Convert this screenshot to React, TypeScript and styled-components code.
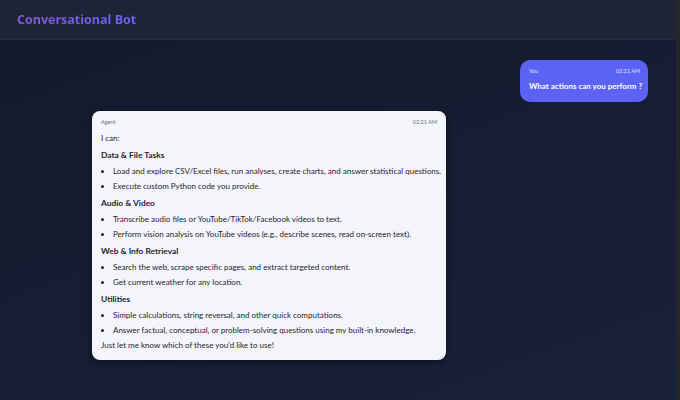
import React from "react";
import styled, { createGlobalStyle } from "styled-components";

const Global = createGlobalStyle`
  html, body { margin: 0; padding: 0; }
  body {
    width: 680px;
    height: 400px;
    overflow: hidden;
    background: #151a2d;
    font-family: "Lato", "Open Sans", sans-serif;
  }
`;

const Shell = styled.div`
  width: 680px;
  height: 400px;
  display: flex;
  flex-direction: column;
  background: linear-gradient(160deg, #141a2c 0%, #171d33 60%, #19203a 100%);
  border-right: 4px solid #23272a;
  box-sizing: border-box;
`;

const Header = styled.header`
  height: 40px;
  flex: none;
  display: flex;
  align-items: center;
  padding: 0 17px;
  background: #1d2435;
  border-bottom: 1px solid #252c3e;
  box-sizing: border-box;
`;

const Title = styled.h1`
  margin: 0;
  font-family: "Open Sans", sans-serif;
  font-size: 12.5px;
  font-weight: 700;
  background: linear-gradient(90deg, #8456e6, #6a64f0);
  -webkit-background-clip: text;
  background-clip: text;
  color: transparent;
`;

const Thread = styled.main`
  flex: 1;
  display: flex;
  flex-direction: column;
  gap: 9px;
  padding: 20px 28px 0 92px;
`;

const Bubble = styled.div<{ $mine?: boolean }>`
  align-self: ${(p) => (p.$mine ? "flex-end" : "flex-start")};
  width: ${(p) => (p.$mine ? "128px" : "354px")};
  box-sizing: border-box;
  border-radius: ${(p) => (p.$mine ? "10px" : "8px")};
  padding: ${(p) => (p.$mine ? "7px 8px 8px 9px" : "7px 9px 7px 9px")};
  background: ${(p) => (p.$mine ? "#5b62f4" : "#f4f5fb")};
  color: ${(p) => (p.$mine ? "#ffffff" : "#1f2330")};
  box-shadow: ${(p) => (p.$mine ? "none" : "0 2px 6px rgba(0,0,0,0.45)")};
`;

const Meta = styled.div<{ $mine?: boolean }>`
  display: flex;
  justify-content: space-between;
  font-size: 5.5px;
  line-height: 8px;
  color: ${(p) => (p.$mine ? "#dfe2ff" : "#6b7080")};
`;

const Question = styled.div`
  margin-top: 4px;
  font-size: 8px;
  font-weight: 700;
  line-height: 15px;
  white-space: nowrap;
`;

const Body = styled.div`
  margin-top: 5px;
  font-size: 8px;
  line-height: 15px;
  white-space: nowrap;
`;

const Para = styled.p`
  margin: 0;
`;

const Heading = styled.p`
  margin: 2px 0 1px;
  font-weight: 700;
  font-size: 8.4px;
`;

const List = styled.ul`
  margin: 0;
  padding-left: 12px;
  list-style: disc;
  & > li { padding-left: 0; }
`;

const sections: { title: string; items: string[] }[] = [
  {
    title: "Data & File Tasks",
    items: [
      "Load and explore CSV/Excel files, run analyses, create charts, and answer statistical questions.",
      "Execute custom Python code you provide.",
    ],
  },
  {
    title: "Audio & Video",
    items: [
      "Transcribe audio files or YouTube/TikTok/Facebook videos to text.",
      "Perform vision analysis on YouTube videos (e.g., describe scenes, read on-screen text).",
    ],
  },
  {
    title: "Web & Info Retrieval",
    items: [
      "Search the web, scrape specific pages, and extract targeted content.",
      "Get current weather for any location.",
    ],
  },
  {
    title: "Utilities",
    items: [
      "Simple calculations, string reversal, and other quick computations.",
      "Answer factual, conceptual, or problem-solving questions using my built-in knowledge.",
    ],
  },
];

export default function App() {
  return (
    <>
      <Global />
      <Shell>
        <Header>
          <Title>Conversational Bot</Title>
        </Header>
        <Thread>
          <Bubble $mine>
            <Meta $mine>
              <span>You</span>
              <span>02:21 AM</span>
            </Meta>
            <Question>What actions can you perform ?</Question>
          </Bubble>
          <Bubble>
            <Meta>
              <span>Agent</span>
              <span>02:21 AM</span>
            </Meta>
            <Body>
              <Para>I can:</Para>
              {sections.map((s) => (
                <React.Fragment key={s.title}>
                  <Heading>{s.title}</Heading>
                  <List>
                    {s.items.map((i) => (
                      <li key={i}>{i}</li>
                    ))}
                  </List>
                </React.Fragment>
              ))}
              <Para>Just let me know which of these you'd like to use!</Para>
            </Body>
          </Bubble>
        </Thread>
      </Shell>
    </>
  );
}
